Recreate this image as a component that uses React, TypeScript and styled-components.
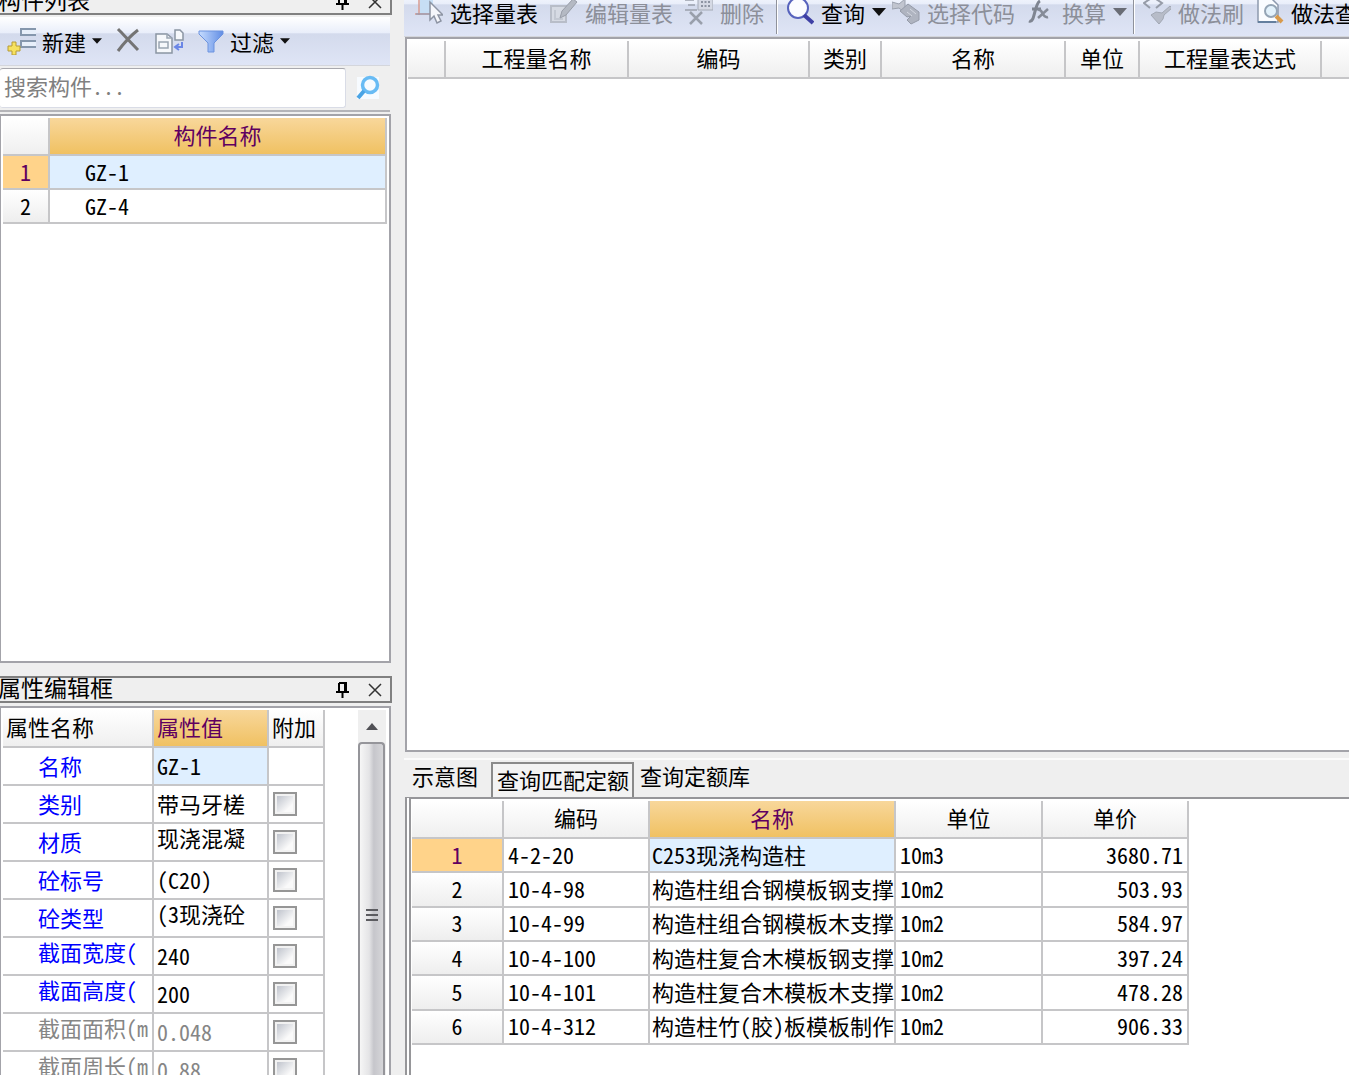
import React, { ReactNode } from 'react';
import styled, { createGlobalStyle, css } from 'styled-components';

const line = '#c6c6c8';
const frame = '#a3a3a9';

const GlobalStyle = createGlobalStyle`
  *, *::before, *::after { box-sizing: border-box; }
  body { margin: 0; overflow: hidden; background: #efefef; }
  body, button, input, table {
    font-family: "Noto Sans CJK SC", "Liberation Sans", sans-serif;
    font-size: 22px;
    line-height: 24px;
    font-feature-settings: "hwid" 1;
    color: #000;
  }
  button { padding: 0; border: 0; background: none; }
`;

const Workspace = styled.main`
  display: grid;
  grid-template-columns: 392px minmax(0, 1fr);
  column-gap: 12px;
  height: calc(100vh + 12px);
  margin-top: -12px;
`;

const Column = styled.div<{ $gap: number }>`
  display: flex;
  flex-direction: column;
  gap: ${p => p.$gap}px;
  min-width: 0;
  min-height: 0;
`;

const Panel = styled.section<{ $height?: number }>`
  display: flex;
  flex-direction: column;
  min-height: 0;
  ${p => (p.$height ? css`flex: 0 0 ${p.$height}px;` : css`flex: 1;`)}
`;

const TitleBar = styled.header`
  display: flex;
  flex: none;
  align-items: center;
  height: 27px;
  padding-right: 8px;
  border: solid #808080;
  border-width: 2px 2px 2px 0;
  h2 {
    flex: 1;
    margin: 0 0 0 -2px;
    padding-bottom: 4px;
    font-size: 23px;
    font-weight: 400;
    line-height: 23px;
  }
`;

const TitleButton = styled.button`
  display: flex;
  margin-left: 18px;
`;

const Toolbar = styled.div`
  display: flex;
  flex: none;
  align-items: center;
  gap: 6px;
  height: 49px;
  padding: 0 8px 0 11px;
  overflow: hidden;
  white-space: nowrap;
  border-bottom: 1px solid #d4d6dc;
  background: linear-gradient(#fff 0, #e9eefa 33%, #d3daec 35%, #dfe5f6 100%);
`;

const ToolButton = styled.button<{ $caret?: boolean }>`
  display: flex;
  flex: none;
  align-items: center;
  gap: 7px;
  padding-right: ${p => (p.$caret ? 0 : 6)}px;
  &:disabled { color: #8c8f99; }
`;

const Separator = styled.span`
  flex: none;
  align-self: stretch;
  width: 2px;
  margin: 0 2px 2px 0;
  border-left: 1px solid #8f929b;
  border-right: 1px solid #fff;
`;

const SideToolbar = styled(Toolbar)`
  margin: 2px 2px 0 0;
  padding-left: 7px;
  gap: 14px;
  ${ToolButton} { gap: 6px; padding-right: 0; }
`;

const SearchRow = styled.form`
  display: flex;
  flex: none;
  height: 46px;
  margin-right: 2px;
  padding: 2px 0;
  border-bottom: 2px solid #b4b4b8;
  input {
    flex: 1;
    min-width: 0;
    padding: 0 4px 6px;
    border: 1px solid #d9dce6;
    border-top-color: #a8a8ae;
    border-left: 0;
    border-radius: 3px;
    outline: 0;
    background: #fff;
  }
  input::placeholder { color: #808080; opacity: 1; }
  button {
    display: grid;
    place-items: center;
    width: 44px;
  }
`;

const Sheet = styled.div`
  display: flex;
  flex: 1;
  align-items: flex-start;
  justify-content: space-between;
  min-height: 0;
  padding: 2px 3px 0 2px;
  overflow: hidden;
  border: 2px solid ${frame};
  border-left-width: 1px;
  background: #fff;
`;

const SideSheet = styled(Sheet)<{ $top: number; $open?: boolean }>`
  margin: ${p => p.$top}px 1px 0 0;
  ${p => p.$open && css`border-bottom: 0;`}
`;

const MainSheet = styled(Sheet)`
  margin-left: 1px;
  padding: 2px 0 0 1px;
  border-left-width: 2px;
  border-right: 0;
`;

const QuerySheet = styled(Sheet)`
  margin-left: 1px;
  padding: 2px 0 0 1px;
  border: 0;
  border-top: 2px solid #969699;
  border-left: 6px double #969699;
`;

const Grid = styled.table<{ $width?: number; $height?: number }>`
  flex: none;
  width: ${p => (p.$width ? `${p.$width}px` : '100%')};
  ${p => p.$height && css`height: ${p.$height}px;`}
  table-layout: fixed;
  border-collapse: separate;
  border-spacing: 0;
`;

const cellBase = css`
  padding: 0 0 3px;
  overflow: hidden;
  font-weight: 400;
  white-space: nowrap;
  border-right: 2px solid ${line};
  border-bottom: 2px solid ${line};
`;

const HeadCell = styled.th<{ $active?: boolean; $left?: boolean; $open?: boolean }>`
  ${cellBase}
  ${p => p.$open && css`border-right: 0;`}
  height: 38px;
  text-align: ${p => (p.$left ? 'left' : 'center')};
  padding-left: ${p => (p.$left ? 3 : 0)}px;
  padding-bottom: 4px;
  color: ${p => (p.$active ? '#5f0060' : '#000')};
  background: ${p => (p.$active ? 'linear-gradient(#f8d79b, #f0c162)' : 'linear-gradient(#fff, #efefef)')};
`;

const RowNumber = styled.th<{ $active?: boolean }>`
  ${cellBase}
  text-align: center;
  color: ${p => (p.$active ? '#5f0060' : '#000')};
  background: ${p => (p.$active ? '#ffd38a' : 'linear-gradient(#fff, #eee)')};
`;

const Cell = styled.td<{ $active?: boolean; $indent?: number; $right?: boolean }>`
  ${cellBase}
  height: 34px;
  padding: 0 4px 3px ${p => p.$indent ?? 4}px;
  text-align: ${p => (p.$right ? 'right' : 'left')};
  background: ${p => (p.$active ? '#dfefff' : '#fff')};
`;

const PropCell = styled(Cell)<{ $tone?: 'blue' | 'grey'; $raised?: boolean }>`
  height: 38px;
  padding-right: 0;
  padding-bottom: ${p => (p.$raised ? 10 : 3)}px;
  color: ${p => (p.$tone === 'blue' ? '#0000ff' : p.$tone === 'grey' ? '#868686' : '#000')};
`;

const TickCell = styled(PropCell)`
  padding-bottom: 0;
`;

const Tick = styled.input`
  display: block;
  appearance: none;
  width: 24px;
  height: 24px;
  margin: 0;
  border: 2px solid #969696;
  background: linear-gradient(135deg, #bfc3cc, #fafafa 75%) content-box, #f2f2f2;
  padding: 2px;
`;

const Scroll = styled.div`
  display: flex;
  flex-direction: column;
  align-self: stretch;
  width: 28px;
  background: #efefef;
`;

const ScrollArrow = styled.button`
  display: grid;
  place-items: center;
  height: 32px;
`;

const ScrollThumb = styled.div`
  display: flex;
  flex: 1;
  flex-direction: column;
  align-items: center;
  gap: 3px;
  width: 27px;
  padding-top: 165px;
  border: 2px solid #95959a;
  border-bottom: 0;
  border-radius: 4px 4px 0 0;
  background: linear-gradient(90deg, #f6f6f6, #e4e4e6 40%, #c6c6cb 60%, #d6d6d9);
  i { width: 12px; height: 2px; background: #5c5c60; }
`;

const Tabs = styled.div`
  display: flex;
  flex: none;
  align-items: flex-end;
  height: 39px;
  padding-left: 2px;
  border-top: 2px solid #fbfbfb;
`;

const Tab = styled.button<{ $active?: boolean }>`
  height: ${p => (p.$active ? 35 : 37)}px;
  padding: ${p => (p.$active ? '0 3px 4px 4px' : '0 5px 8px 6px')};
  ${p => p.$active ? css`
    margin-left: 8px;
    border: 2px solid #8a8a8a;
    border-bottom: 0;
    background: #f3f3f3;
  ` : ''}
`;

function Caret({ size = 14, color = '#111' }: { size?: number; color?: string }) {
  return <svg width={size} height="8" viewBox="0 0 14 8"><path d="M0 0h14L7 8z" fill={color} /></svg>;
}

const Pin = () => (
  <svg width="14" height="18" viewBox="0 0 14 18"><path d="M3 2h7v9M3 2v9M0 11h13M6.500 11v6" fill="none" stroke="#000" strokeWidth="2" /><path d="M8 2h3v9H8z" fill="#000" /></svg>
);
const Close = () => (
  <svg width="14" height="14" viewBox="0 0 14 14"><path d="M1 1l12 12M13 1L1 13" stroke="#333" strokeWidth="1.5" /></svg>
);

const Icon = ({ w = 28, children }: { w?: number; children: ReactNode }) => (
  <svg width={w} height="28" viewBox={`0 0 ${w} 28`} fill="none">{children}</svg>
);

const NewIcon = () => (
  <Icon w={29}>
    <path d="M29 2H14v6h15M29 14H14v6h15" stroke="#8597ad" strokeWidth="2" />
    <path d="M15 3h14v4H15zM15 15h14v4H15z" fill="#e7effa" />
    <path d="M5 15h4v4h4v5H9v4H5v-4H1v-5h4z" fill="#f6e15f" stroke="#b69b35" />
  </Icon>
);
const DeleteIcon = () => (
  <Icon w={24}><path d="M2 2c5 5 13 14 20 21M22 3C14 9 8 16 2 24" stroke="#747474" strokeWidth="3" /></Icon>
);
const CopyIcon = () => (
  <Icon w={30}>
    <path d="M2 7h11l5 4v15H2z" fill="#f6f8fb" stroke="#8b95a3" strokeWidth="1.500" />
    <path d="M13 7v4h5M5 15h9v6H5z" stroke="#9ba5b2" strokeWidth="1.500" />
    <path d="M21 3h5l3 3v7h-8z" fill="#f6f8fb" stroke="#8b95a3" strokeWidth="1.500" />
    <path d="M28 15v5h-6M25 17l-4 3 4 3" stroke="#6b87e6" strokeWidth="2" />
  </Icon>
);
const FunnelIcon = () => (
  <Icon w={26}>
    <defs><linearGradient id="funnel"><stop stopColor="#c6dcff" /><stop offset="1" stopColor="#618de4" /></linearGradient></defs>
    <path d="M1 4h24v3l-9 9v9h-6v-9L1 7z" fill="url(#funnel)" stroke="#6c93df" />
  </Icon>
);
const Lens = () => (
  <svg width="26" height="26" viewBox="0 0 26 26" fill="none">
    <path d="M2 2h22v22H2z" fill="#f7fbff" /><circle cx="15" cy="10" r="7.500" stroke="#68bbf4" strokeWidth="3.500" />
    <path d="M9 16l-6 7" stroke="#4aa4e5" strokeWidth="4" />
  </svg>
);
const SelectIcon = () => (
  <Icon>
    <path d="M4 0v17M0 16h16" stroke="#d79c91" strokeWidth="1.500" /><path d="M5 0h13v15H5z" fill="#c7def4" /><path d="M1 16h15" stroke="#8297b5" />
    <path d="M15 4v18l4-4 3 7 4-2-3-6h5z" fill="#f5f6fb" stroke="#8d94a3" strokeWidth="1.500" />
  </Icon>
);
const EditIcon = () => (
  <Icon>
    <path d="M1 8h15v16H1z" fill="#d6dae3" stroke="#b8bdc8" strokeWidth="2" /><path d="M5 12v9h8" stroke="#c3c8d2" strokeWidth="2" />
    <path d="M10 20l2-7L23 1l4 3-11 13z" fill="#b4b9c3" stroke="#989da8" />
  </Icon>
);
const RemoveIcon = () => (
  <Icon>
    <path d="M0 2h9M3 7h7M0 12h12" stroke="#9aa0ac" strokeWidth="1.500" /><path d="M13 0h15v12H13z" fill="#d5d9e4" stroke="#a4aab6" />
    <path d="M16 4h9M16 8h9" stroke="#8d94a2" strokeWidth="2" strokeDasharray="2 1.500" />
    <path d="M5 14l12 12M17 14L5 26" stroke="#999fab" strokeWidth="2.500" />
  </Icon>
);
const QueryIcon = () => (
  <Icon><circle cx="12" cy="10" r="10" fill="#fbfcff" stroke="#5763bd" strokeWidth="2" /><path d="M18 17l9 8" stroke="#3f40a5" strokeWidth="4" /></Icon>
);
const CodeIcon = () => (
  <Icon>
    <path d="M0 4l7 2 6-5v14l-6-5-7 1z" fill="#c1c5cf" stroke="#9ba1ae" />
    <path d="M8 13l8-7 11 8v8l-8 4-4-4 4-4-4 1z" fill="#afb4c0" stroke="#959ba8" /><path d="M15 14l5 4M18 11l6 5" stroke="#d5d9e2" />
  </Icon>
);
const FormulaIcon = () => (
  <Icon>
    <path d="M2 23c6 3 5-17 11-20M5 11h9" stroke="#7f8591" strokeWidth="3" /><path d="M11 12c5-2 4 9 10 7M21 11l-10 9" stroke="#858b97" strokeWidth="2.500" />
  </Icon>
);
const BrushIcon = () => (
  <Icon>
    <path d="M7 1L1 5l6 5M13 1l6 4-6 5" stroke="#969ca8" strokeWidth="2" />
    <path d="M27 8l-8 7-6-1-5 3 8 9 4-5 1-4 8-7z" fill="#b7bcc8" stroke="#a2a8b4" />
  </Icon>
);
const ReviewIcon = () => (
  <Icon>
    <path d="M2 1h14l6 6v17H2z" fill="#fafcff" stroke="#8d99ad" strokeWidth="1.500" /><path d="M2 24h18" stroke="#647f9e" strokeWidth="2" />
    <circle cx="15" cy="13" r="6" fill="#e2f1fb" stroke="#94a4b5" strokeWidth="2" /><path d="M20 18l6 6" stroke="#d89a4b" strokeWidth="4" />
  </Icon>
);

const takeoffColumns: [string, number?][] = [
  ['', 38], ['工程量名称', 183], ['编码', 181], ['类别', 72], ['名称', 184], ['单位', 74], ['工程量表达式', 182], [''],
];

interface Property { name: string; value: string; tone: 'blue' | 'grey'; raisedName?: boolean; raisedValue?: boolean; active?: boolean }

const properties: Property[] = [
  { name: '名称', value: 'GZ-1', tone: 'blue', active: true },
  { name: '类别', value: '带马牙槎', tone: 'blue' },
  { name: '材质', value: '现浇混凝', tone: 'blue', raisedValue: true },
  { name: '砼标号', value: '(C20)', tone: 'blue' },
  { name: '砼类型', value: '(3现浇砼', tone: 'blue', raisedValue: true },
  { name: '截面宽度(', value: '240', tone: 'blue', raisedName: true },
  { name: '截面高度(', value: '200', tone: 'blue', raisedName: true },
  { name: '截面面积(m', value: '0.048', tone: 'grey', raisedName: true },
  { name: '截面周长(m', value: '0.88', tone: 'grey', raisedName: true },
];

const quotas = [
  ['4-2-20', 'C253现浇构造柱', '10m3', '3680.71'],
  ['10-4-98', '构造柱组合钢模板钢支撑', '10m2', '503.93'],
  ['10-4-99', '构造柱组合钢模板木支撑', '10m2', '584.97'],
  ['10-4-100', '构造柱复合木模板钢支撑', '10m2', '397.24'],
  ['10-4-101', '构造柱复合木模板木支撑', '10m2', '478.28'],
  ['10-4-312', '构造柱竹(胶)板模板制作', '10m2', '906.33'],
];

function PanelTitle({ children }: { children: ReactNode }) {
  return (
    <TitleBar>
      <h2>{children}</h2>
      <TitleButton aria-label="固定"><Pin /></TitleButton>
      <TitleButton aria-label="关闭"><Close /></TitleButton>
    </TitleBar>
  );
}

function ComponentList() {
  return (
    <Panel>
      <PanelTitle>构件列表</PanelTitle>
      <SideToolbar>
        <ToolButton><NewIcon />新建<Caret size={10} /></ToolButton>
        <ToolButton aria-label="删除"><DeleteIcon /></ToolButton>
        <ToolButton aria-label="复制"><CopyIcon /></ToolButton>
        <ToolButton><FunnelIcon />过滤<Caret size={10} /></ToolButton>
      </SideToolbar>
      <SearchRow>
        <input type="text" aria-label="搜索构件" placeholder="搜索构件..." />
        <button type="button" aria-label="搜索"><Lens /></button>
      </SearchRow>
      <SideSheet $top={2}>
        <Grid $width={384}>
          <colgroup><col style={{ width: 47 }} /><col /></colgroup>
          <thead><tr><HeadCell /><HeadCell $active>构件名称</HeadCell></tr></thead>
          <tbody>
            {['GZ-1', 'GZ-4'].map((name, i) => (
              <tr key={name}>
                <RowNumber $active={i === 0}>{i + 1}</RowNumber>
                <Cell $active={i === 0} $indent={35}>{name}</Cell>
              </tr>
            ))}
          </tbody>
        </Grid>
      </SideSheet>
    </Panel>
  );
}

function PropertyEditor() {
  return (
    <Panel $height={399}>
      <PanelTitle>属性编辑框</PanelTitle>
      <SideSheet $top={3} $open>
        <Grid $width={322}>
          <colgroup><col style={{ width: 151 }} /><col style={{ width: 115 }} /><col /></colgroup>
          <thead>
            <tr><HeadCell $left>属性名称</HeadCell><HeadCell $left $active>属性值</HeadCell><HeadCell $left>附加</HeadCell></tr>
          </thead>
          <tbody>
            {properties.map(p => (
              <tr key={p.name}>
                <PropCell $indent={35} $tone={p.tone} $raised={p.raisedName}>{p.name}</PropCell>
                <PropCell $indent={3} $tone={p.tone === 'grey' ? 'grey' : undefined} $raised={p.raisedValue} $active={p.active}>{p.value}</PropCell>
                <TickCell>{!p.active && <Tick type="checkbox" aria-label={`附加 ${p.name}`} />}</TickCell>
              </tr>
            ))}
          </tbody>
        </Grid>
        <Scroll>
          <ScrollArrow aria-label="向上滚动"><svg width="12" height="7" viewBox="0 0 12 7"><path d="M0 7l6-7 6 7z" fill="#505055" /></svg></ScrollArrow>
          <ScrollThumb><i /><i /><i /></ScrollThumb>
        </Scroll>
      </SideSheet>
    </Panel>
  );
}

function TakeoffTable() {
  return (
    <Panel>
      <Toolbar>
        <ToolButton><SelectIcon />选择量表</ToolButton>
        <ToolButton disabled><EditIcon />编辑量表</ToolButton>
        <ToolButton disabled><RemoveIcon />删除</ToolButton>
        <Separator />
        <ToolButton $caret><QueryIcon />查询<Caret /></ToolButton>
        <ToolButton disabled><CodeIcon />选择代码</ToolButton>
        <ToolButton disabled $caret><FormulaIcon />换算<Caret color="#696c75" /></ToolButton>
        <Separator />
        <ToolButton disabled><BrushIcon />做法刷</ToolButton>
        <ToolButton><ReviewIcon />做法查询</ToolButton>
      </Toolbar>
      <MainSheet>
        <Grid>
          <colgroup>{takeoffColumns.map(([, w], i) => <col key={i} style={{ width: w }} />)}</colgroup>
          <thead><tr>{takeoffColumns.map(([label, w], i) => <HeadCell key={i} $open={!w}>{label}</HeadCell>)}</tr></thead>
        </Grid>
      </MainSheet>
    </Panel>
  );
}

function QuotaQuery() {
  return (
    <Panel $height={317}>
      <Tabs role="tablist">
        <Tab role="tab">示意图</Tab>
        <Tab role="tab" aria-selected $active>查询匹配定额</Tab>
        <Tab role="tab">查询定额库</Tab>
      </Tabs>
      <QuerySheet>
        <Grid $width={777} $height={244}>
          <colgroup>{[92, 146, 246, 147, 146].map((w, i) => <col key={i} style={{ width: w }} />)}</colgroup>
          <thead>
            <tr>
              <HeadCell /><HeadCell>编码</HeadCell><HeadCell $active>名称</HeadCell><HeadCell>单位</HeadCell><HeadCell>单价</HeadCell>
            </tr>
          </thead>
          <tbody>
            {quotas.map(([code, name, unit, price], i) => (
              <tr key={code}>
                <RowNumber $active={i === 0}>{i + 1}</RowNumber>
                <Cell>{code}</Cell>
                <Cell $indent={2} $active={i === 0}>{name}</Cell>
                <Cell>{unit}</Cell>
                <Cell $right>{price}</Cell>
              </tr>
            ))}
          </tbody>
        </Grid>
      </QuerySheet>
    </Panel>
  );
}

export default function App() {
  return (
    <>
      <GlobalStyle />
      <Workspace>
        <Column $gap={13}><ComponentList /><PropertyEditor /></Column>
        <Column $gap={6}><TakeoffTable /><QuotaQuery /></Column>
      </Workspace>
    </>
  );
}
